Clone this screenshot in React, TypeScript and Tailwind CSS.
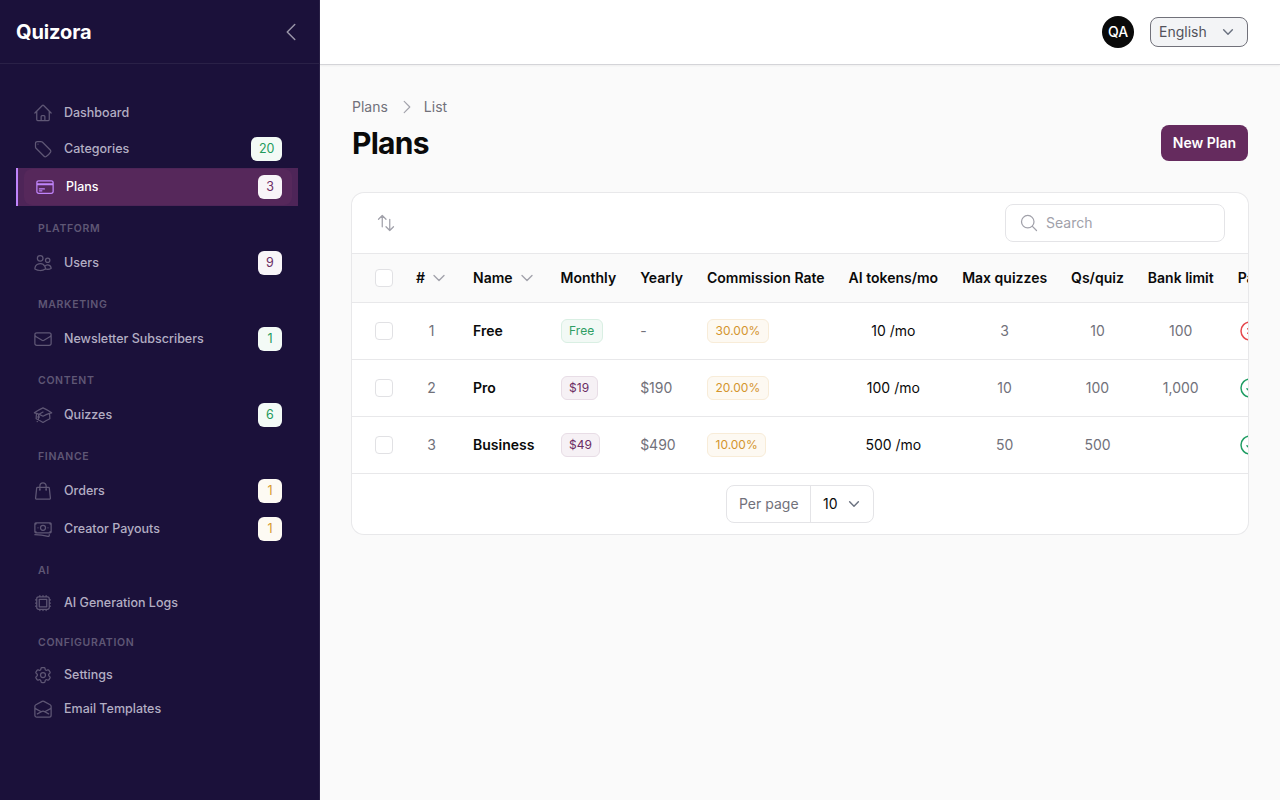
import React from "react";
import {
  HiOutlineHome, HiOutlineTag, HiOutlineCreditCard, HiOutlineUsers, HiOutlineEnvelope,
  HiOutlineAcademicCap, HiOutlineShoppingBag, HiOutlineBanknotes, HiOutlineCpuChip,
  HiOutlineCog6Tooth, HiOutlineEnvelopeOpen, HiOutlineChevronLeft, HiOutlineChevronRight,
  HiOutlineChevronDown, HiOutlineArrowsUpDown, HiOutlineMagnifyingGlass, HiOutlineXCircle,
  HiOutlineCheckCircle,
} from "react-icons/hi2";

type Tone = "green" | "purple" | "amber";
const badgeTone: Record<Tone, string> = {
  green: "bg-[#f3faf6] text-[#239a5b]",
  purple: "bg-[#f8f5f8] text-[#6b2c64]",
  amber: "bg-[#fdfaf3] text-[#d69a2d]",
};

function NavItem({ icon: Icon, label, badge, tone }: { icon: React.ElementType; label: string; badge?: string; tone?: Tone }) {
  return (
    <div className={`flex items-center pl-[17px] pr-4 ${badge ? "h-[38px]" : "h-[34px]"}`}>
      <Icon className="w-5 h-5 text-[#5f5775] shrink-0" />
      <span className="ml-[11px] text-[12.5px] font-medium text-[#b3aec3]">{label}</span>
      {badge && tone && (
        <span className={`ml-auto h-6 min-w-6 px-[7.5px] rounded-md flex items-center justify-center text-[12.5px] ${badgeTone[tone]}`}>{badge}</span>
      )}
    </div>
  );
}

function GroupLabel({ children }: { children: React.ReactNode }) {
  return <div className="h-4 pl-[22px] text-[10.5px] leading-4 font-semibold tracking-[0.65px] uppercase text-[#5f5775]">{children}</div>;
}

function Check() {
  return <span className="block w-[18px] h-[18px] rounded bg-white border border-[#e1e1e4]" />;
}

function Badge({ children, tone }: { children: React.ReactNode; tone: "green" | "purple" | "amber" }) {
  const t = {
    green: "bg-[#f2f9f5] border-[#d9efe3] text-[#2f9e63]",
    purple: "bg-[#f6f1f5] border-[#e8dde6] text-[#6b2c64]",
    amber: "bg-[#fdf9f2] border-[#f8ecd8] text-[#d4952d]",
  }[tone];
  return <span className={`inline-flex items-center h-6 px-[7.5px] rounded-md border text-xs font-normal ${t}`}>{children}</span>;
}

const rows = [
  { n: 1, name: "Free", m: "Free", mt: "green" as const, y: "-", c: "30.00%", t: "10 /mo", q: "3", qs: "10", b: "100", ok: false },
  { n: 2, name: "Pro", m: "$19", mt: "purple" as const, y: "$190", c: "20.00%", t: "100 /mo", q: "10", qs: "100", b: "1,000", ok: true },
  { n: 3, name: "Business", m: "$49", mt: "purple" as const, y: "$490", c: "10.00%", t: "500 /mo", q: "50", qs: "500", b: "", ok: true },
];

export default function App() {
  return (
    <div className="flex min-h-[800px] bg-[#fafafa] text-[#0a0a0a]" style={{ fontFamily: "Inter, 'Noto Sans', sans-serif" }}>
      <aside className="w-[320px] shrink-0 bg-[#1b113a] border-r border-[#2a2147] h-[800px]">
        <div className="h-16 flex items-center justify-between pl-4 pr-4 border-b border-[#2a2147]">
          <span className="text-xl font-bold text-white tracking-[-0.1px]">Quizora</span>
          <HiOutlineChevronLeft className="w-6 h-6 text-[#9a95a8]" />
        </div>
        <nav className="pt-[32px] pl-4 pr-[21px]">
          <NavItem icon={HiOutlineHome} label="Dashboard" />
          <NavItem icon={HiOutlineTag} label="Categories" badge="20" tone="green" />
          <div className="h-[38px] border-l-2 border-[#c084fc] bg-[#4e2558] flex items-center py-px pl-1.5 pr-1.5">
            <div className="flex-1 h-full rounded-lg bg-[#56285b] flex items-center pl-[11px] pr-2.5">
              <HiOutlineCreditCard className="w-5 h-5 text-[#c084fc] shrink-0" />
              <span className="ml-[11px] text-[12.5px] font-medium text-white">Plans</span>
              <span className={`ml-auto h-6 min-w-6 rounded-md flex items-center justify-center text-[12.5px] ${badgeTone.purple}`}>3</span>
            </div>
          </div>
          <div className="pt-[15px] pb-[7px]"><GroupLabel>Platform</GroupLabel></div>
          <NavItem icon={HiOutlineUsers} label="Users" badge="9" tone="purple" />
          <div className="pt-[15px] pb-[7px]"><GroupLabel>Marketing</GroupLabel></div>
          <NavItem icon={HiOutlineEnvelope} label="Newsletter Subscribers" badge="1" tone="green" />
          <div className="pt-[15px] pb-[7px]"><GroupLabel>Content</GroupLabel></div>
          <NavItem icon={HiOutlineAcademicCap} label="Quizzes" badge="6" tone="green" />
          <div className="pt-[15px] pb-[7px]"><GroupLabel>Finance</GroupLabel></div>
          <NavItem icon={HiOutlineShoppingBag} label="Orders" badge="1" tone="amber" />
          <NavItem icon={HiOutlineBanknotes} label="Creator Payouts" badge="1" tone="amber" />
          <div className="pt-[15px] pb-[7px]"><GroupLabel>AI</GroupLabel></div>
          <NavItem icon={HiOutlineCpuChip} label="AI Generation Logs" />
          <div className="pt-[15px] pb-[7px]"><GroupLabel>Configuration</GroupLabel></div>
          <NavItem icon={HiOutlineCog6Tooth} label="Settings" />
          <NavItem icon={HiOutlineEnvelopeOpen} label="Email Templates" />
        </nav>
      </aside>

      <div className="flex-1 min-w-0">
        <header className="h-[65px] bg-white border-b border-[#d4d4d8] shadow-[0_1px_2px_rgba(0,0,0,0.05)] flex items-center justify-end pr-8 gap-4">
          <div className="w-8 h-8 rounded-full bg-[#0a0a0a] text-white text-sm font-medium flex items-center justify-center">QA</div>
          <div className="w-[98px] h-[30px] rounded-lg bg-[#f3f4f6] border border-[#71717a] flex items-center justify-between pl-2 pr-3 text-sm text-[#52525b]">
            <span>English</span>
            <HiOutlineChevronDown className="w-3.5 h-3.5 text-[#6b7280]" strokeWidth={2.5} />
          </div>
        </header>

        <main className="px-8 pt-8">
          <div className="flex items-center text-sm text-[#71717a] h-5">
            <span>Plans</span>
            <HiOutlineChevronRight className="w-[18px] h-[18px] ml-2.5 mr-2 text-[#a1a1aa]" />
            <span>List</span>
          </div>
          <div className="flex items-center justify-between mt-[4px] h-[44px]">
            <h1 className="text-3xl font-bold tracking-tight">Plans</h1>
            <button className="h-9 w-[87px] rounded-lg bg-[#652b5e] text-white text-sm font-semibold">New Plan</button>
          </div>

          <div className="mt-[28px] h-[341px] rounded-xl ring-1 ring-[#e8e8ea] bg-white overflow-hidden">
            <div className="h-[60px] flex items-center justify-between pl-6 pr-[23px]">
              <HiOutlineArrowsUpDown className="w-5 h-5 text-[#a1a1aa]" />
              <div className="w-[220px] h-[38px] rounded-lg border border-[#e4e4e7] flex items-center pl-[13px] text-sm text-[#a1a1aa]">
                <HiOutlineMagnifyingGlass className="w-5 h-5" />
                <span className="ml-[7px]">Search</span>
              </div>
            </div>
            <table className="border-collapse w-max text-sm">
              <thead>
                <tr className="h-[49px] bg-[#fafafa] border-y border-[#e8e8ea] text-left font-semibold">
                  <th className="pl-[23px] pr-[11px] w-[52px]"><Check /></th>
                  <th className="pl-3 pr-[14px] font-semibold"><span className="flex items-center gap-1.5">#<HiOutlineChevronDown className="w-4 h-4 text-[#a1a1aa]" strokeWidth={2} /></span></th>
                  <th className="pl-3 pr-[14px] font-semibold"><span className="flex items-center gap-1.5">Name<HiOutlineChevronDown className="w-4 h-4 text-[#a1a1aa]" strokeWidth={2} /></span></th>
                  <th className="px-3 font-semibold">Monthly</th>
                  <th className="px-3 font-semibold">Yearly</th>
                  <th className="px-3 font-semibold">Commission Rate</th>
                  <th className="px-3 font-semibold">AI tokens/mo</th>
                  <th className="px-3 font-semibold">Max quizzes</th>
                  <th className="px-3 font-semibold">Qs/quiz</th>
                  <th className="px-3 font-semibold">Bank limit</th>
                  <th className="px-3 font-semibold">Paid</th>
                </tr>
              </thead>
              <tbody>
                {rows.map((r) => (
                  <tr key={r.n} className="h-[57px] border-b border-[#e8e8ea]">
                    <td className="pl-[23px] pr-[11px]"><Check /></td>
                    <td className="pl-3 pr-[14px] text-center text-[#71717a]">{r.n}</td>
                    <td className="pl-3 pr-[14px] font-semibold">{r.name}</td>
                    <td className="px-3"><Badge tone={r.mt}>{r.m}</Badge></td>
                    <td className="px-3 text-[#71717a]">{r.y}</td>
                    <td className="px-3"><Badge tone="amber">{r.c}</Badge></td>
                    <td className="px-3 text-center">{r.t}</td>
                    <td className="px-3 text-center text-[#71717a]">{r.q}</td>
                    <td className="px-3 text-center text-[#71717a]">{r.qs}</td>
                    <td className="px-3 text-center text-[#71717a]">{r.b}</td>
                    <td className="px-3">
                      {r.ok ? <HiOutlineCheckCircle className="w-6 h-6 text-[#1f9d63]" /> : <HiOutlineXCircle className="w-6 h-6 text-[#e5484d]" />}
                    </td>
                  </tr>
                ))}
              </tbody>
            </table>
            <div className="h-[60px] flex items-center justify-center">
              <div className="h-[38px] w-[148px] rounded-lg border border-[#e4e4e7] flex items-center text-sm">
                <span className="w-[84px] h-full pl-3 flex items-center text-[#71717a] border-r border-[#e4e4e7]">Per page</span>
                <span className="pl-3">10</span>
                <HiOutlineChevronDown className="w-3.5 h-3.5 ml-auto mr-3 text-[#6b7280]" strokeWidth={2.5} />
              </div>
            </div>
          </div>
        </main>
      </div>
    </div>
  );
}
